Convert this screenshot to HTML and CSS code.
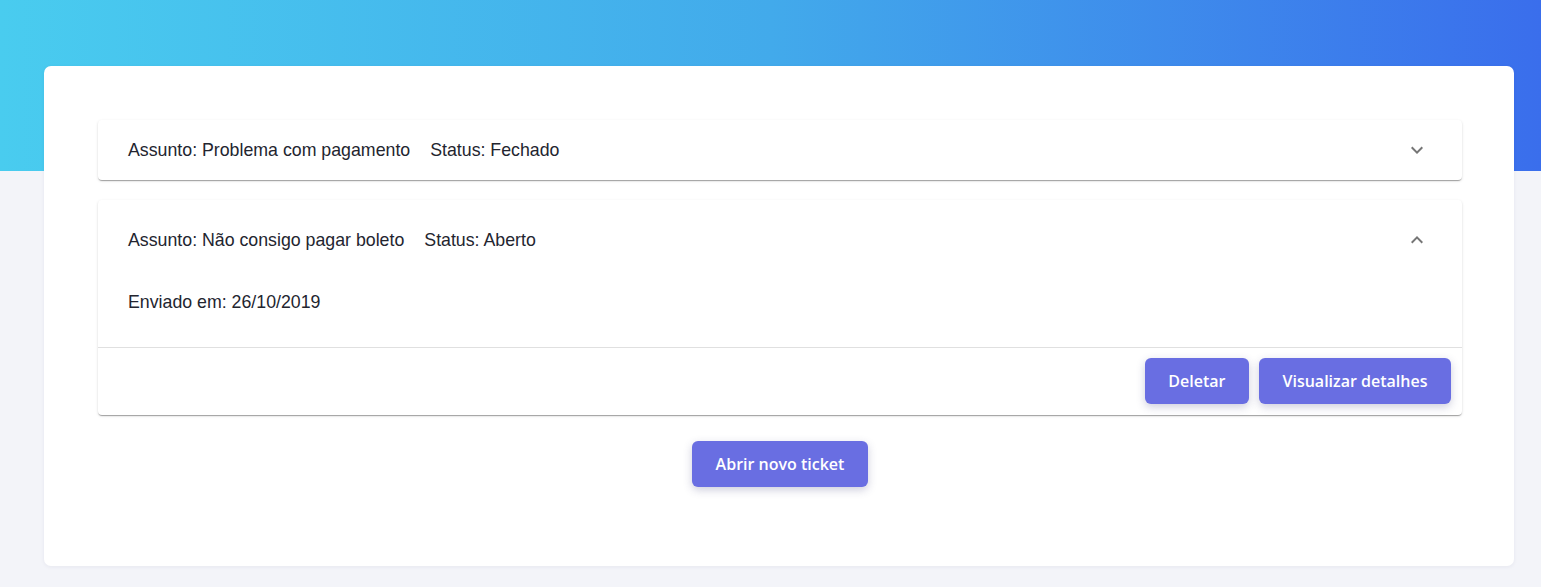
FILE: index.html
```html
<!DOCTYPE html>
<html lang="pt-BR">
<head>
<meta charset="utf-8">
<title>Tickets</title>
<link rel="stylesheet" href="styles.css">
</head>
<body>
<div class="page">
  <main class="card">
    <section class="panel">
      <div class="panel-summary">
        <div class="summary-text">
          <span class="subject">Assunto: Problema com pagamento</span>
          <span class="status">Status: Fechado</span>
        </div>
        <svg class="chevron" viewBox="0 0 24 24" width="24" height="24"><path d="M16.59 8.59L12 13.17 7.41 8.59 6 10l6 6 6-6z"/></svg>
      </div>
    </section>
    <section class="panel expanded">
      <div class="panel-summary tall">
        <div class="summary-text">
          <span class="subject">Assunto: Não consigo pagar boleto</span>
          <span class="status">Status: Aberto</span>
        </div>
        <svg class="chevron" viewBox="0 0 24 24" width="24" height="24"><path d="M12 8l-6 6 1.41 1.41L12 10.83l4.59 4.58L18 14z"/></svg>
      </div>
      <div class="panel-details">Enviado em: 26/10/2019</div>
      <div class="panel-actions">
        <button class="btn">Deletar</button>
        <button class="btn">Visualizar detalhes</button>
      </div>
    </section>
    <div class="new-ticket">
      <button class="btn">Abrir novo ticket</button>
    </div>
  </main>
</div>
</body>
</html>
```

FILE: styles.css
```css
html, body {
  margin: 0;
  padding: 0;
}
body {
  background-color: #f3f4f9;
  background-image: linear-gradient(90deg, #49ccef 0%, #42aaeb 50%, #3a6eec 100%);
  background-size: 100% 171px;
  background-repeat: no-repeat;
  font-family: "Liberation Sans", Arial, sans-serif;
  color: #23252f;
  height: 587px;
  overflow: hidden;
}
.page {
  padding: 66px 27px 0 44px;
}
.card {
  background: #fff;
  border-radius: 7px;
  box-shadow: 0 1px 4px rgba(30, 40, 90, 0.06);
  padding: 54px 52px 79px 54px;
  display: flex;
  flex-direction: column;
  gap: 20px;
}
.panel {
  background: #fff;
  border-radius: 4px;
  box-shadow: 0px 2px 1px -1px rgba(0,0,0,0.2), 0px 1px 1px 0px rgba(0,0,0,0.14), 0px 1px 3px 0px rgba(0,0,0,0.12);
}
.panel-summary {
  height: 60px;
  display: flex;
  align-items: center;
  justify-content: space-between;
  padding: 0 33px 0 30px;
}
.panel-summary.tall {
  height: 80px;
}
.summary-text {
  font-size: 17.75px;
  display: flex;
  gap: 20px;
}
.chevron {
  fill: rgba(0,0,0,0.54);
  display: block;
}
.panel-details {
  font-size: 17.75px;
  line-height: 22px;
  padding: 11px 30px 34px;
}
.panel-actions {
  border-top: 1px solid #e0e0e0;
  display: flex;
  justify-content: flex-end;
  gap: 10px;
  padding: 10px 11px 11px;
}
.btn {
  font-family: "Open Sans", sans-serif;
  font-weight: 600;
  font-size: 16px;
  color: #fff;
  background: #696ee2;
  border: none;
  border-radius: 6px;
  height: 46px;
  padding: 0 23.5px;
  box-shadow: 0 3px 8px rgba(60, 60, 120, 0.25);
  cursor: pointer;
}
.new-ticket {
  display: flex;
  justify-content: center;
  margin-top: 6px;
}
```
